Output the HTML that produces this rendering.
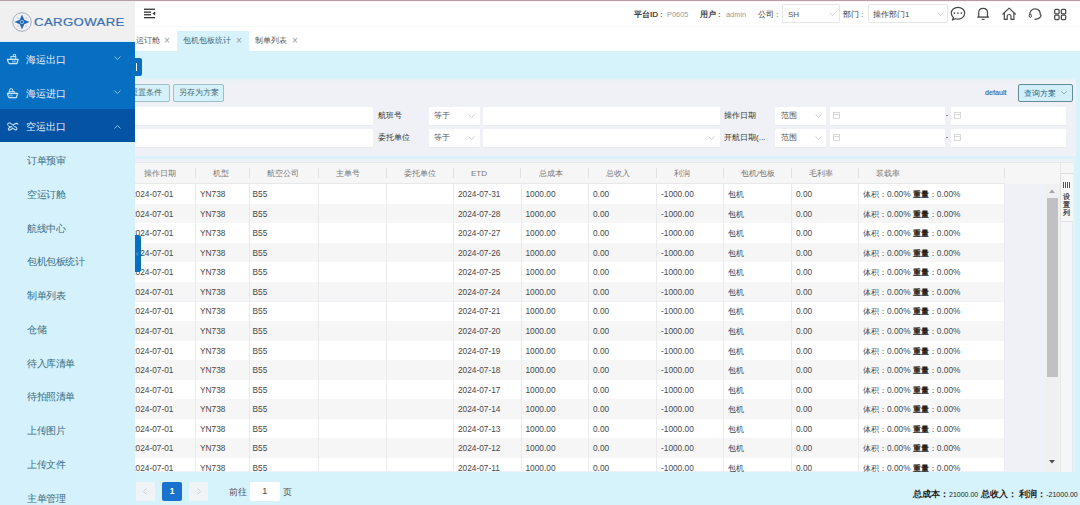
<!DOCTYPE html><html><head><meta charset="utf-8"><style>
*{margin:0;padding:0;box-sizing:border-box;}
html,body{width:1080px;height:505px;overflow:hidden;}
body{position:relative;background:#d6f2fb;font-family:"Liberation Sans",sans-serif;color:#333;}
.a{position:absolute;}
.nw{white-space:nowrap;}
.topline{left:0;top:0;width:1080px;height:1px;background:#b59ea5;}
.logo{left:0;top:1px;width:135px;height:40.5px;background:#f0f0f0;}
.side{left:0;top:41px;width:135px;height:464px;background:#d4f1fc;}
.m1{left:0;top:41.5px;width:135px;height:67.5px;background:#066fc2;}
.m2{left:0;top:109px;width:135px;height:33px;background:#0453a5;}
.mi{font-size:9.6px;color:#e8f3ff;white-space:nowrap;line-height:12px;}
.si{left:27px;font-size:10px;transform:scale(0.955);transform-origin:0 50%;color:#3a6d84;white-space:nowrap;line-height:12px;}
.hdr{left:135px;top:1px;width:945px;height:49.5px;background:#fff;}
.ht{font-size:8px;color:#333;white-space:nowrap;line-height:10px;}
.hv{font-size:8px;color:#9a9a9a;white-space:nowrap;line-height:10px;}
.sel{background:#fff;border:1px solid #e6e6e6;border-radius:2px;}
.tab{font-size:8px;line-height:10px;white-space:nowrap;color:#555;}
.panel{left:135px;top:78px;width:941px;height:77.5px;background:linear-gradient(#dcf3fa 0px,#eaf1f7 2px,#eff1f6 5px);}
.btn{background:#d5f1f9;border:1px solid #9dbec5;border-radius:2px;font-size:8.2px;color:#3f6474;line-height:16px;text-align:center;white-space:nowrap;}
.inp{background:#fff;border-radius:1px;box-shadow:0 0.6px 0 #e2e4e8;}
.lbl{font-size:8px;color:#333;line-height:10px;white-space:nowrap;}
.sv{font-size:8px;color:#555;line-height:10px;white-space:nowrap;}
.tbl{left:135px;top:162px;width:940px;height:309px;background:#eef1f6;overflow:hidden;}
.cell{position:absolute;font-size:8.3px;line-height:10px;color:#484848;white-space:nowrap;}
.hc{position:absolute;font-size:8px;line-height:10px;color:#787878;white-space:nowrap;}
.chev{position:absolute;}
</style></head><body>
<div class="a topline"></div>
<div class="a hdr"></div>
<div class="a" style="left:135px;top:1px;width:945px;height:1px;background:#fdf1f4"></div>
<div class="a" style="left:135px;top:26px;width:945px;height:1px;background:#f8f8f8"></div>
<svg class="a" style="left:143.6px;top:8px" width="12" height="11" viewBox="0 0 12 11"><rect x="0" y="0.6" width="11" height="1.3" fill="#333"/><rect x="0" y="3.5" width="7" height="1.3" fill="#333"/><rect x="0" y="6.1" width="7" height="1.3" fill="#333"/><rect x="0" y="9" width="11" height="1.3" fill="#333"/><path d="M11.2 3.6 L8.4 5.6 L11.2 7.6 Z" fill="#333"/></svg>
<div class="a ht" style="left:634px;top:9.7px;color:#222;-webkit-text-stroke:0.2px #222">平台ID :</div>
<div class="a hv" style="left:667px;top:10px;font-size:7.4px">P0605</div>
<div class="a ht" style="left:700px;top:9.7px;color:#222;-webkit-text-stroke:0.2px #222">用户 :</div>
<div class="a hv" style="left:726px;top:10px;font-size:7.4px">admin</div>
<div class="a ht" style="left:758px;top:9.7px">公司 :</div>
<div class="a sel" style="left:782px;top:4px;width:58px;height:19px"></div>
<div class="a ht" style="left:788px;top:10px;color:#555">SH</div>
<svg class="a" style="left:829px;top:12px" width="7" height="4" viewBox="0 0 7 4"><path d="M0.5 0.5 L3.5 3.5 L6.5 0.5" fill="none" stroke="#c0c4cc" stroke-width="0.8"/></svg>
<div class="a ht" style="left:843px;top:9.7px">部门 :</div>
<div class="a sel" style="left:868px;top:4px;width:80px;height:19px"></div>
<div class="a ht" style="left:873px;top:9.7px;color:#444">操作部门1</div>
<svg class="a" style="left:937px;top:12px" width="7" height="4" viewBox="0 0 7 4"><path d="M0.5 0.5 L3.5 3.5 L6.5 0.5" fill="none" stroke="#c0c4cc" stroke-width="0.8"/></svg>
<svg class="a" style="left:940px;top:0px" width="140" height="28" viewBox="940 0 140 28">
<path d="M955.2 18.7 C956.1 19 957 19.1 958 19.1 C961.8 19.1 964.7 16.4 964.7 13.1 C964.7 9.8 961.8 7.3 958 7.3 C954.2 7.3 951.3 9.8 951.3 13.1 C951.3 14.8 952.1 16.3 953.4 17.4 L952.3 19.9 Z" fill="none" stroke="#484848" stroke-width="1.15" stroke-linejoin="round"/>
<circle cx="954.4" cy="13.1" r="0.85" fill="#484848"/><circle cx="957.9" cy="13.1" r="0.85" fill="#484848"/><circle cx="961.4" cy="13.1" r="0.85" fill="#484848"/>
<path d="M978.7 17 L978.7 12.6 C978.7 9.9 980.5 8.3 983.1 8.3 C985.7 8.3 987.5 9.9 987.5 12.6 L987.5 17" fill="none" stroke="#484848" stroke-width="1.2"/>
<path d="M977.3 17.1 L988.9 17.1" stroke="#484848" stroke-width="1.4"/>
<path d="M981.6 19.4 L984.6 19.4" stroke="#484848" stroke-width="1.1"/>
<path d="M1002.7 14.2 L1009.1 8.1 L1015.5 14.2" fill="none" stroke="#484848" stroke-width="1.2" stroke-linejoin="round" stroke-linecap="round"/>
<path d="M1004.3 12.9 L1004.3 19.4 L1007.2 19.4 L1007.2 16.4 C1007.2 15.2 1008 14.5 1009.1 14.5 C1010.2 14.5 1011 15.2 1011 16.4 L1011 19.4 L1013.9 19.4 L1013.9 12.9" fill="none" stroke="#484848" stroke-width="1.2" stroke-linejoin="round"/>
<path d="M1029.6 15.2 C1029.6 11.3 1031.8 8.9 1035 8.9 C1038.2 8.9 1040.4 11.3 1040.4 15.2" fill="none" stroke="#484848" stroke-width="1.2"/>
<ellipse cx="1030.3" cy="15.7" rx="1.1" ry="1.7" fill="none" stroke="#484848" stroke-width="1"/>
<path d="M1040.4 14.6 C1041.3 15 1041.3 16.6 1040.2 17.2 C1039.2 18.6 1037.4 19.4 1034.6 19.4" fill="none" stroke="#484848" stroke-width="1.2"/>
<rect x="1054.7" y="9.4" width="4.4" height="4.4" rx="1" fill="none" stroke="#484848" stroke-width="1.25"/>
<rect x="1061.3" y="9.4" width="4.4" height="4.4" rx="1" fill="none" stroke="#484848" stroke-width="1.25"/>
<rect x="1054.7" y="15.1" width="4.4" height="4.4" rx="1" fill="none" stroke="#484848" stroke-width="1.25"/>
<rect x="1061.3" y="15.1" width="4.4" height="4.4" rx="1" fill="none" stroke="#484848" stroke-width="1.25"/>
</svg>
<div class="a" style="left:177px;top:31px;width:72px;height:20px;background:#d6f2fb"></div>
<div class="a tab" style="left:136px;top:36px">运订舱</div>
<div class="a tab" style="left:164px;top:35.5px;color:#999;font-size:10px">×</div>
<div class="a tab" style="left:183px;top:36px;color:#3a6e8c">包机包板统计</div>
<div class="a tab" style="left:236px;top:35.5px;color:#999;font-size:10px">×</div>
<div class="a tab" style="left:255px;top:36px">制单列表</div>
<div class="a tab" style="left:292px;top:35.5px;color:#999;font-size:10px">×</div>
<div class="a" style="left:128px;top:58px;width:14px;height:18px;background:#0b6dc0;border-radius:2px"></div>
<div class="a" style="left:135.5px;top:63px;width:1px;height:8px;background:#fff"></div>
<div class="a panel"></div>
<div class="a btn" style="left:123px;top:84px;width:46.5px;height:18px">重置条件</div>
<div class="a btn" style="left:173px;top:84px;width:51px;height:18px">另存为方案</div>
<div class="a" style="left:985px;top:88px;font-size:7.2px;line-height:10px;color:#3d6398;-webkit-text-stroke:0.15px #3d6398">default</div>
<div class="a btn" style="left:1018px;top:84px;width:55px;height:18px;border-color:#5e8d96;color:#1e6384;text-align:left;padding-left:4.5px;font-size:8.4px;background:#d3f0fa">查询方案</div>
<svg class="a" style="left:1061px;top:91px" width="6" height="3.5" viewBox="0 0 6 3.5"><path d="M0.5 0.5 L3.0 3.0 L5.5 0.5" fill="none" stroke="#7a9aa6" stroke-width="0.8"/></svg>
<div class="a inp" style="left:135px;top:106.5px;width:238px;height:18px"></div>
<div class="a lbl" style="left:378px;top:110.5px">航班号</div>
<div class="a inp" style="left:429px;top:106.5px;width:51px;height:18px"></div>
<div class="a sv" style="left:434px;top:111.0px">等于</div>
<svg class="a" style="left:468px;top:114.0px" width="7" height="4" viewBox="0 0 7 4"><path d="M0.5 0.5 L3.5 3.5 L6.5 0.5" fill="none" stroke="#c0c4cc" stroke-width="0.8"/></svg>
<div class="a inp" style="left:482.5px;top:106.5px;width:237px;height:18px"></div>
<div class="a lbl" style="left:724px;top:110.5px">操作日期</div>
<div class="a inp" style="left:775px;top:106.5px;width:51px;height:18px"></div>
<div class="a sv" style="left:780.5px;top:111.0px">范围</div>
<svg class="a" style="left:815px;top:114.0px" width="7" height="4" viewBox="0 0 7 4"><path d="M0.5 0.5 L3.5 3.5 L6.5 0.5" fill="none" stroke="#c0c4cc" stroke-width="0.8"/></svg>
<div class="a inp" style="left:829.5px;top:106.5px;width:115px;height:18px"></div>
<svg class="a" style="left:832.5px;top:112.0px" width="7" height="7" viewBox="0 0 7 7"><rect x="0.5" y="0.5" width="6" height="6" fill="none" stroke="#d0d0d0" stroke-width="0.8"/><path d="M0.5 2.5 L6.5 2.5" stroke="#d0d0d0" stroke-width="0.8"/></svg>
<div class="a" style="left:946.2px;top:115.1px;width:2.2px;height:1px;background:#8a8a8a"></div>
<div class="a inp" style="left:951px;top:106.5px;width:115px;height:18px"></div>
<svg class="a" style="left:953.5px;top:112.0px" width="7" height="7" viewBox="0 0 7 7"><rect x="0.5" y="0.5" width="6" height="6" fill="none" stroke="#d0d0d0" stroke-width="0.8"/><path d="M0.5 2.5 L6.5 2.5" stroke="#d0d0d0" stroke-width="0.8"/></svg>
<div class="a inp" style="left:135px;top:128.5px;width:238px;height:18px"></div>
<div class="a lbl" style="left:378px;top:132.5px">委托单位</div>
<div class="a inp" style="left:429px;top:128.5px;width:51px;height:18px"></div>
<div class="a sv" style="left:434px;top:133.0px">等于</div>
<svg class="a" style="left:468px;top:136.0px" width="7" height="4" viewBox="0 0 7 4"><path d="M0.5 0.5 L3.5 3.5 L6.5 0.5" fill="none" stroke="#c0c4cc" stroke-width="0.8"/></svg>
<div class="a inp" style="left:482.5px;top:128.5px;width:237px;height:18px"></div>
<svg class="a" style="left:708px;top:136.0px" width="7" height="4" viewBox="0 0 7 4"><path d="M0.5 0.5 L3.5 3.5 L6.5 0.5" fill="none" stroke="#c0c4cc" stroke-width="0.8"/></svg>
<div class="a lbl" style="left:724px;top:132.5px">开航日期(...</div>
<div class="a inp" style="left:775px;top:128.5px;width:51px;height:18px"></div>
<div class="a sv" style="left:780.5px;top:133.0px">范围</div>
<svg class="a" style="left:815px;top:136.0px" width="7" height="4" viewBox="0 0 7 4"><path d="M0.5 0.5 L3.5 3.5 L6.5 0.5" fill="none" stroke="#c0c4cc" stroke-width="0.8"/></svg>
<div class="a inp" style="left:829.5px;top:128.5px;width:115px;height:18px"></div>
<svg class="a" style="left:832.5px;top:134.0px" width="7" height="7" viewBox="0 0 7 7"><rect x="0.5" y="0.5" width="6" height="6" fill="none" stroke="#d0d0d0" stroke-width="0.8"/><path d="M0.5 2.5 L6.5 2.5" stroke="#d0d0d0" stroke-width="0.8"/></svg>
<div class="a" style="left:946.2px;top:137.1px;width:2.2px;height:1px;background:#8a8a8a"></div>
<div class="a inp" style="left:951px;top:128.5px;width:115px;height:18px"></div>
<svg class="a" style="left:953.5px;top:134.0px" width="7" height="7" viewBox="0 0 7 7"><rect x="0.5" y="0.5" width="6" height="6" fill="none" stroke="#d0d0d0" stroke-width="0.8"/><path d="M0.5 2.5 L6.5 2.5" stroke="#d0d0d0" stroke-width="0.8"/></svg>
<div class="a" style="left:135px;top:155.5px;width:941px;height:3px;background:#dbf2f8"></div>
<div class="a" style="left:135px;top:158.5px;width:941px;height:313px;background:linear-gradient(90deg,#eff1f6 936px,#e4f3f9 939px,#d6f2fb 941px)"></div>
<div class="a" style="left:135px;top:162px;width:938px;height:1px;background:#e6e8ec"></div>
<div class="a" style="left:135px;top:163px;width:938px;height:20.5px;background:#f6f6f6"></div>
<div class="a" style="left:135px;top:182.5px;width:869.5px;height:1px;background:#e8e8e8"></div>
<div class="a hc" style="left:144.0px;top:168.5px">操作日期</div>
<div class="a hc" style="left:213.0px;top:168.5px">机型</div>
<div class="a hc" style="left:267.0px;top:168.5px">航空公司</div>
<div class="a hc" style="left:336.0px;top:168.5px">主单号</div>
<div class="a hc" style="left:404.0px;top:168.5px">委托单位</div>
<div class="a hc" style="left:471.0px;top:168.5px">ETD</div>
<div class="a hc" style="left:538.5px;top:168.5px">总成本</div>
<div class="a hc" style="left:606.0px;top:168.5px">总收入</div>
<div class="a hc" style="left:674.0px;top:168.5px">利润</div>
<div class="a hc" style="left:741.0px;top:168.5px">包机/包板</div>
<div class="a hc" style="left:809.0px;top:168.5px">毛利率</div>
<div class="a hc" style="left:876.0px;top:168.5px">装载率</div>
<div class="a" style="left:194.9px;top:168px;width:1px;height:10px;background:#e2e2e2"></div>
<div class="a" style="left:248.9px;top:168px;width:1px;height:10px;background:#e2e2e2"></div>
<div class="a" style="left:317.9px;top:168px;width:1px;height:10px;background:#e2e2e2"></div>
<div class="a" style="left:385.9px;top:168px;width:1px;height:10px;background:#e2e2e2"></div>
<div class="a" style="left:452.9px;top:168px;width:1px;height:10px;background:#e2e2e2"></div>
<div class="a" style="left:520.4px;top:168px;width:1px;height:10px;background:#e2e2e2"></div>
<div class="a" style="left:587.9px;top:168px;width:1px;height:10px;background:#e2e2e2"></div>
<div class="a" style="left:655.9px;top:168px;width:1px;height:10px;background:#e2e2e2"></div>
<div class="a" style="left:722.9px;top:168px;width:1px;height:10px;background:#e2e2e2"></div>
<div class="a" style="left:790.9px;top:168px;width:1px;height:10px;background:#e2e2e2"></div>
<div class="a" style="left:857.9px;top:168px;width:1px;height:10px;background:#e2e2e2"></div>
<div class="a" style="left:1003.9px;top:168px;width:1px;height:10px;background:#e2e2e2"></div>
<div class="a" style="left:135px;top:184.2px;width:869.5px;height:19.55px;background:#ffffff"></div>
<div class="a cell" style="left:131.0px;top:189.1px">2024-07-01</div>
<div class="a cell" style="left:200.0px;top:189.1px">YN738</div>
<div class="a cell" style="left:252.5px;top:189.1px">B55</div>
<div class="a cell" style="left:458.0px;top:189.1px">2024-07-31</div>
<div class="a cell" style="left:525.5px;top:189.1px">1000.00</div>
<div class="a cell" style="left:593.0px;top:189.1px">0.00</div>
<div class="a cell" style="left:661.0px;top:189.1px">-1000.00</div>
<div class="a cell" style="left:728.0px;top:189.1px">包机</div>
<div class="a cell" style="left:796.0px;top:189.1px">0.00</div>
<div class="a cell" style="left:863.0px;top:189.1px">体积：0.00% <b style="font-weight:bold;color:#222">重量</b>：0.00%</div>
<div class="a" style="left:135px;top:203.75px;width:869.5px;height:19.55px;background:#f6f6f6"></div>
<div class="a cell" style="left:131.0px;top:208.65px">2024-07-01</div>
<div class="a cell" style="left:200.0px;top:208.65px">YN738</div>
<div class="a cell" style="left:252.5px;top:208.65px">B55</div>
<div class="a cell" style="left:458.0px;top:208.65px">2024-07-28</div>
<div class="a cell" style="left:525.5px;top:208.65px">1000.00</div>
<div class="a cell" style="left:593.0px;top:208.65px">0.00</div>
<div class="a cell" style="left:661.0px;top:208.65px">-1000.00</div>
<div class="a cell" style="left:728.0px;top:208.65px">包机</div>
<div class="a cell" style="left:796.0px;top:208.65px">0.00</div>
<div class="a cell" style="left:863.0px;top:208.65px">体积：0.00% <b style="font-weight:bold;color:#222">重量</b>：0.00%</div>
<div class="a" style="left:135px;top:223.29999999999998px;width:869.5px;height:19.55px;background:#ffffff"></div>
<div class="a cell" style="left:131.0px;top:228.2px">2024-07-01</div>
<div class="a cell" style="left:200.0px;top:228.2px">YN738</div>
<div class="a cell" style="left:252.5px;top:228.2px">B55</div>
<div class="a cell" style="left:458.0px;top:228.2px">2024-07-27</div>
<div class="a cell" style="left:525.5px;top:228.2px">1000.00</div>
<div class="a cell" style="left:593.0px;top:228.2px">0.00</div>
<div class="a cell" style="left:661.0px;top:228.2px">-1000.00</div>
<div class="a cell" style="left:728.0px;top:228.2px">包机</div>
<div class="a cell" style="left:796.0px;top:228.2px">0.00</div>
<div class="a cell" style="left:863.0px;top:228.2px">体积：0.00% <b style="font-weight:bold;color:#222">重量</b>：0.00%</div>
<div class="a" style="left:135px;top:242.85px;width:869.5px;height:19.55px;background:#f6f6f6"></div>
<div class="a cell" style="left:131.0px;top:247.75px">2024-07-01</div>
<div class="a cell" style="left:200.0px;top:247.75px">YN738</div>
<div class="a cell" style="left:252.5px;top:247.75px">B55</div>
<div class="a cell" style="left:458.0px;top:247.75px">2024-07-26</div>
<div class="a cell" style="left:525.5px;top:247.75px">1000.00</div>
<div class="a cell" style="left:593.0px;top:247.75px">0.00</div>
<div class="a cell" style="left:661.0px;top:247.75px">-1000.00</div>
<div class="a cell" style="left:728.0px;top:247.75px">包机</div>
<div class="a cell" style="left:796.0px;top:247.75px">0.00</div>
<div class="a cell" style="left:863.0px;top:247.75px">体积：0.00% <b style="font-weight:bold;color:#222">重量</b>：0.00%</div>
<div class="a" style="left:135px;top:262.4px;width:869.5px;height:19.55px;background:#ffffff"></div>
<div class="a cell" style="left:131.0px;top:267.29999999999995px">2024-07-01</div>
<div class="a cell" style="left:200.0px;top:267.29999999999995px">YN738</div>
<div class="a cell" style="left:252.5px;top:267.29999999999995px">B55</div>
<div class="a cell" style="left:458.0px;top:267.29999999999995px">2024-07-25</div>
<div class="a cell" style="left:525.5px;top:267.29999999999995px">1000.00</div>
<div class="a cell" style="left:593.0px;top:267.29999999999995px">0.00</div>
<div class="a cell" style="left:661.0px;top:267.29999999999995px">-1000.00</div>
<div class="a cell" style="left:728.0px;top:267.29999999999995px">包机</div>
<div class="a cell" style="left:796.0px;top:267.29999999999995px">0.00</div>
<div class="a cell" style="left:863.0px;top:267.29999999999995px">体积：0.00% <b style="font-weight:bold;color:#222">重量</b>：0.00%</div>
<div class="a" style="left:135px;top:281.95px;width:869.5px;height:19.55px;background:#f6f6f6"></div>
<div class="a cell" style="left:131.0px;top:286.84999999999997px">2024-07-01</div>
<div class="a cell" style="left:200.0px;top:286.84999999999997px">YN738</div>
<div class="a cell" style="left:252.5px;top:286.84999999999997px">B55</div>
<div class="a cell" style="left:458.0px;top:286.84999999999997px">2024-07-24</div>
<div class="a cell" style="left:525.5px;top:286.84999999999997px">1000.00</div>
<div class="a cell" style="left:593.0px;top:286.84999999999997px">0.00</div>
<div class="a cell" style="left:661.0px;top:286.84999999999997px">-1000.00</div>
<div class="a cell" style="left:728.0px;top:286.84999999999997px">包机</div>
<div class="a cell" style="left:796.0px;top:286.84999999999997px">0.00</div>
<div class="a cell" style="left:863.0px;top:286.84999999999997px">体积：0.00% <b style="font-weight:bold;color:#222">重量</b>：0.00%</div>
<div class="a" style="left:135px;top:301.5px;width:869.5px;height:19.55px;background:#ffffff"></div>
<div class="a cell" style="left:131.0px;top:306.4px">2024-07-01</div>
<div class="a cell" style="left:200.0px;top:306.4px">YN738</div>
<div class="a cell" style="left:252.5px;top:306.4px">B55</div>
<div class="a cell" style="left:458.0px;top:306.4px">2024-07-21</div>
<div class="a cell" style="left:525.5px;top:306.4px">1000.00</div>
<div class="a cell" style="left:593.0px;top:306.4px">0.00</div>
<div class="a cell" style="left:661.0px;top:306.4px">-1000.00</div>
<div class="a cell" style="left:728.0px;top:306.4px">包机</div>
<div class="a cell" style="left:796.0px;top:306.4px">0.00</div>
<div class="a cell" style="left:863.0px;top:306.4px">体积：0.00% <b style="font-weight:bold;color:#222">重量</b>：0.00%</div>
<div class="a" style="left:135px;top:321.04999999999995px;width:869.5px;height:19.55px;background:#f6f6f6"></div>
<div class="a cell" style="left:131.0px;top:325.94999999999993px">2024-07-01</div>
<div class="a cell" style="left:200.0px;top:325.94999999999993px">YN738</div>
<div class="a cell" style="left:252.5px;top:325.94999999999993px">B55</div>
<div class="a cell" style="left:458.0px;top:325.94999999999993px">2024-07-20</div>
<div class="a cell" style="left:525.5px;top:325.94999999999993px">1000.00</div>
<div class="a cell" style="left:593.0px;top:325.94999999999993px">0.00</div>
<div class="a cell" style="left:661.0px;top:325.94999999999993px">-1000.00</div>
<div class="a cell" style="left:728.0px;top:325.94999999999993px">包机</div>
<div class="a cell" style="left:796.0px;top:325.94999999999993px">0.00</div>
<div class="a cell" style="left:863.0px;top:325.94999999999993px">体积：0.00% <b style="font-weight:bold;color:#222">重量</b>：0.00%</div>
<div class="a" style="left:135px;top:340.6px;width:869.5px;height:19.55px;background:#ffffff"></div>
<div class="a cell" style="left:131.0px;top:345.5px">2024-07-01</div>
<div class="a cell" style="left:200.0px;top:345.5px">YN738</div>
<div class="a cell" style="left:252.5px;top:345.5px">B55</div>
<div class="a cell" style="left:458.0px;top:345.5px">2024-07-19</div>
<div class="a cell" style="left:525.5px;top:345.5px">1000.00</div>
<div class="a cell" style="left:593.0px;top:345.5px">0.00</div>
<div class="a cell" style="left:661.0px;top:345.5px">-1000.00</div>
<div class="a cell" style="left:728.0px;top:345.5px">包机</div>
<div class="a cell" style="left:796.0px;top:345.5px">0.00</div>
<div class="a cell" style="left:863.0px;top:345.5px">体积：0.00% <b style="font-weight:bold;color:#222">重量</b>：0.00%</div>
<div class="a" style="left:135px;top:360.15px;width:869.5px;height:19.55px;background:#f6f6f6"></div>
<div class="a cell" style="left:131.0px;top:365.04999999999995px">2024-07-01</div>
<div class="a cell" style="left:200.0px;top:365.04999999999995px">YN738</div>
<div class="a cell" style="left:252.5px;top:365.04999999999995px">B55</div>
<div class="a cell" style="left:458.0px;top:365.04999999999995px">2024-07-18</div>
<div class="a cell" style="left:525.5px;top:365.04999999999995px">1000.00</div>
<div class="a cell" style="left:593.0px;top:365.04999999999995px">0.00</div>
<div class="a cell" style="left:661.0px;top:365.04999999999995px">-1000.00</div>
<div class="a cell" style="left:728.0px;top:365.04999999999995px">包机</div>
<div class="a cell" style="left:796.0px;top:365.04999999999995px">0.00</div>
<div class="a cell" style="left:863.0px;top:365.04999999999995px">体积：0.00% <b style="font-weight:bold;color:#222">重量</b>：0.00%</div>
<div class="a" style="left:135px;top:379.7px;width:869.5px;height:19.55px;background:#ffffff"></div>
<div class="a cell" style="left:131.0px;top:384.59999999999997px">2024-07-01</div>
<div class="a cell" style="left:200.0px;top:384.59999999999997px">YN738</div>
<div class="a cell" style="left:252.5px;top:384.59999999999997px">B55</div>
<div class="a cell" style="left:458.0px;top:384.59999999999997px">2024-07-17</div>
<div class="a cell" style="left:525.5px;top:384.59999999999997px">1000.00</div>
<div class="a cell" style="left:593.0px;top:384.59999999999997px">0.00</div>
<div class="a cell" style="left:661.0px;top:384.59999999999997px">-1000.00</div>
<div class="a cell" style="left:728.0px;top:384.59999999999997px">包机</div>
<div class="a cell" style="left:796.0px;top:384.59999999999997px">0.00</div>
<div class="a cell" style="left:863.0px;top:384.59999999999997px">体积：0.00% <b style="font-weight:bold;color:#222">重量</b>：0.00%</div>
<div class="a" style="left:135px;top:399.25px;width:869.5px;height:19.55px;background:#f6f6f6"></div>
<div class="a cell" style="left:131.0px;top:404.15px">2024-07-01</div>
<div class="a cell" style="left:200.0px;top:404.15px">YN738</div>
<div class="a cell" style="left:252.5px;top:404.15px">B55</div>
<div class="a cell" style="left:458.0px;top:404.15px">2024-07-14</div>
<div class="a cell" style="left:525.5px;top:404.15px">1000.00</div>
<div class="a cell" style="left:593.0px;top:404.15px">0.00</div>
<div class="a cell" style="left:661.0px;top:404.15px">-1000.00</div>
<div class="a cell" style="left:728.0px;top:404.15px">包机</div>
<div class="a cell" style="left:796.0px;top:404.15px">0.00</div>
<div class="a cell" style="left:863.0px;top:404.15px">体积：0.00% <b style="font-weight:bold;color:#222">重量</b>：0.00%</div>
<div class="a" style="left:135px;top:418.8px;width:869.5px;height:19.55px;background:#ffffff"></div>
<div class="a cell" style="left:131.0px;top:423.7px">2024-07-01</div>
<div class="a cell" style="left:200.0px;top:423.7px">YN738</div>
<div class="a cell" style="left:252.5px;top:423.7px">B55</div>
<div class="a cell" style="left:458.0px;top:423.7px">2024-07-13</div>
<div class="a cell" style="left:525.5px;top:423.7px">1000.00</div>
<div class="a cell" style="left:593.0px;top:423.7px">0.00</div>
<div class="a cell" style="left:661.0px;top:423.7px">-1000.00</div>
<div class="a cell" style="left:728.0px;top:423.7px">包机</div>
<div class="a cell" style="left:796.0px;top:423.7px">0.00</div>
<div class="a cell" style="left:863.0px;top:423.7px">体积：0.00% <b style="font-weight:bold;color:#222">重量</b>：0.00%</div>
<div class="a" style="left:135px;top:438.35px;width:869.5px;height:19.55px;background:#f6f6f6"></div>
<div class="a cell" style="left:131.0px;top:443.25px">2024-07-01</div>
<div class="a cell" style="left:200.0px;top:443.25px">YN738</div>
<div class="a cell" style="left:252.5px;top:443.25px">B55</div>
<div class="a cell" style="left:458.0px;top:443.25px">2024-07-12</div>
<div class="a cell" style="left:525.5px;top:443.25px">1000.00</div>
<div class="a cell" style="left:593.0px;top:443.25px">0.00</div>
<div class="a cell" style="left:661.0px;top:443.25px">-1000.00</div>
<div class="a cell" style="left:728.0px;top:443.25px">包机</div>
<div class="a cell" style="left:796.0px;top:443.25px">0.00</div>
<div class="a cell" style="left:863.0px;top:443.25px">体积：0.00% <b style="font-weight:bold;color:#222">重量</b>：0.00%</div>
<div class="a" style="left:135px;top:457.9px;width:869.5px;height:13.600000000000023px;background:#ffffff"></div>
<div class="a cell" style="left:131.0px;top:462.79999999999995px">2024-07-01</div>
<div class="a cell" style="left:200.0px;top:462.79999999999995px">YN738</div>
<div class="a cell" style="left:252.5px;top:462.79999999999995px">B55</div>
<div class="a cell" style="left:458.0px;top:462.79999999999995px">2024-07-11</div>
<div class="a cell" style="left:525.5px;top:462.79999999999995px">1000.00</div>
<div class="a cell" style="left:593.0px;top:462.79999999999995px">0.00</div>
<div class="a cell" style="left:661.0px;top:462.79999999999995px">-1000.00</div>
<div class="a cell" style="left:728.0px;top:462.79999999999995px">包机</div>
<div class="a cell" style="left:796.0px;top:462.79999999999995px">0.00</div>
<div class="a cell" style="left:863.0px;top:462.79999999999995px">体积：0.00% <b style="font-weight:bold;color:#222">重量</b>：0.00%</div>
<div class="a" style="left:195.0px;top:184.2px;width:1px;height:287.3px;background:#ebebeb"></div>
<div class="a" style="left:249.0px;top:184.2px;width:1px;height:287.3px;background:#ebebeb"></div>
<div class="a" style="left:318.0px;top:184.2px;width:1px;height:287.3px;background:#ebebeb"></div>
<div class="a" style="left:386.0px;top:184.2px;width:1px;height:287.3px;background:#ebebeb"></div>
<div class="a" style="left:453.0px;top:184.2px;width:1px;height:287.3px;background:#ebebeb"></div>
<div class="a" style="left:520.5px;top:184.2px;width:1px;height:287.3px;background:#ebebeb"></div>
<div class="a" style="left:588.0px;top:184.2px;width:1px;height:287.3px;background:#ebebeb"></div>
<div class="a" style="left:656.0px;top:184.2px;width:1px;height:287.3px;background:#ebebeb"></div>
<div class="a" style="left:723.0px;top:184.2px;width:1px;height:287.3px;background:#ebebeb"></div>
<div class="a" style="left:791.0px;top:184.2px;width:1px;height:287.3px;background:#ebebeb"></div>
<div class="a" style="left:858.0px;top:184.2px;width:1px;height:287.3px;background:#ebebeb"></div>
<div class="a" style="left:1004.0px;top:184.2px;width:1px;height:287.3px;background:#ebebeb"></div>
<div class="a" style="left:1044.5px;top:183.5px;width:14.5px;height:288px;background:#f0f0f0"></div>
<svg class="a" style="left:1049px;top:189px" width="6" height="4" viewBox="0 0 6 4"><path d="M0 4 L3 0.5 L6 4 Z" fill="#a3a3a3"/></svg>
<div class="a" style="left:1046.5px;top:198px;width:11px;height:179px;background:#c1c1c1"></div>
<svg class="a" style="left:1049px;top:460px" width="6" height="4" viewBox="0 0 6 4"><path d="M0 0 L3 3.5 L6 0 Z" fill="#505050"/></svg>
<div class="a" style="left:1059.5px;top:182.5px;width:13.5px;height:289px;background:#f5f6f9;border-left:1px solid #e8e9ec;border-right:1px solid #e8e9ec"></div>
<div class="a" style="left:1059.5px;top:163px;width:1px;height:20px;background:#e8e8e8"></div>
<div class="a" style="left:1059.5px;top:173px;width:13.5px;height:48.5px;background:#f7f7f7;border-top:1px solid #dcdcdc;border-bottom:1px solid #e2e2e2;border-left:1px solid #e2e2e2"></div>
<div class="a" style="left:1063px;top:182px;width:1px;height:5.6px;background:#555"></div>
<div class="a" style="left:1065px;top:182px;width:1px;height:5.6px;background:#555"></div>
<div class="a" style="left:1067px;top:182px;width:1px;height:5.6px;background:#555"></div>
<div class="a" style="left:1069px;top:182px;width:1px;height:5.6px;background:#555"></div>
<div class="a" style="left:1060px;width:12px;text-align:center;top:191.6px;font-size:7.2px;line-height:9px;color:#2a2a2a;-webkit-text-stroke:0.2px #2a2a2a">设</div>
<div class="a" style="left:1060px;width:12px;text-align:center;top:200.0px;font-size:7.2px;line-height:9px;color:#2a2a2a;-webkit-text-stroke:0.2px #2a2a2a">置</div>
<div class="a" style="left:1060px;width:12px;text-align:center;top:208.4px;font-size:7.2px;line-height:9px;color:#2a2a2a;-webkit-text-stroke:0.2px #2a2a2a">列</div>
<div class="a" style="left:136px;top:482px;width:18.5px;height:18.7px;background:#f1f4f7;border-radius:2px"></div>
<div class="a" style="left:189px;top:482px;width:19px;height:18.7px;background:#f1f4f7;border-radius:2px"></div>
<svg class="a" style="left:143px;top:488.3px" width="4" height="7" viewBox="0 0 4 7"><path d="M3.5 0.5 L0.5 3.5 L3.5 6.5" fill="none" stroke="#c8ccd2" stroke-width="0.8"/></svg>
<svg class="a" style="left:196.8px;top:488.3px" width="4" height="7" viewBox="0 0 4 7"><path d="M0.5 0.5 L3.5 3.5 L0.5 6.5" fill="none" stroke="#c8ccd2" stroke-width="0.8"/></svg>
<div class="a" style="left:162px;top:482px;width:20px;height:18.7px;background:#1b72cc;border-radius:2px;color:#fff;font-size:8.5px;font-weight:bold;line-height:18.7px;text-align:center">1</div>
<div class="a" style="left:229px;top:486.5px;font-size:8.5px;line-height:10px;color:#555">前往</div>
<div class="a" style="left:250px;top:482px;width:29.5px;height:18.7px;background:#fff;border-radius:2px;font-size:9px;line-height:18.7px;text-align:center;color:#444">1</div>
<div class="a" style="left:283px;top:486.5px;font-size:8.5px;line-height:10px;color:#555">页</div>
<div class="a nw" style="left:913px;top:489.3px;font-size:9px;line-height:11px;color:#222"><b>总成本：</b><span style="font-size:7px">21000.00</span> <b>总收入：</b> <b>利润：</b><span style="font-size:7px">-21000.00</span></div>
<div class="a logo"></div>
<svg class="a" style="left:10.6px;top:10.9px" width="22" height="22" viewBox="0 0 22 22"><circle cx="11" cy="11" r="9.3" fill="none" stroke="#8aa0ba" stroke-width="0.8"/><path d="M11 3.6 L13.3 8.7 L18.6 11 L13.3 13.3 L11 18.4 L8.7 13.3 L3.4 11 L8.7 8.7 Z" fill="#2a68b4"/><circle cx="11" cy="11" r="1.7" fill="none" stroke="#9cc8ee" stroke-width="0.8"/><circle cx="7" cy="7" r="0.5" fill="#5580b8"/><circle cx="15" cy="7" r="0.5" fill="#5580b8"/><circle cx="7" cy="15" r="0.5" fill="#5580b8"/><circle cx="15" cy="15" r="0.5" fill="#5580b8"/></svg>
<div class="a nw" style="left:34px;top:15.5px;font-size:11.5px;line-height:12px;color:#3a6fb2;letter-spacing:0.3px;-webkit-text-stroke:0.2px #3a6fb2;transform:scaleX(1.15);transform-origin:0 0">CARGOWARE</div>
<div class="a side"></div>
<div class="a m1"></div><div class="a m2"></div>
<div class="a mi" style="left:25.5px;top:54px">海运出口</div>
<div class="a mi" style="left:25.5px;top:87.5px">海运进口</div>
<div class="a mi" style="left:25.5px;top:121px">空运出口</div>
<svg class="a" style="left:113.5px;top:56px" width="7" height="4" viewBox="0 0 7 4"><path d="M0.5 0.5 L3.5 3.5 L6.5 0.5" fill="none" stroke="#8cc0f0" stroke-width="1"/></svg>
<svg class="a" style="left:113.5px;top:90px" width="7" height="4" viewBox="0 0 7 4"><path d="M0.5 0.5 L3.5 3.5 L6.5 0.5" fill="none" stroke="#8cc0f0" stroke-width="1"/></svg>
<svg class="a" style="left:113.5px;top:125px" width="7" height="4" viewBox="0 0 7 4"><path d="M0.5 3.5 L3.5 0.5 L6.5 3.5" fill="none" stroke="#8cc0f0" stroke-width="1"/></svg>
<svg class="a" style="left:4px;top:50px" width="20" height="20" viewBox="0 0 20 20"><path d="M3.4 9.3 L14.1 9.3 L12.9 13.6 L5.3 13.6 Q3.9 12 3.4 9.3 Z" fill="none" stroke="#c4e4ff" stroke-width="1.3" stroke-linejoin="round"/><rect x="6.9" y="6.6" width="4.9" height="2.7" fill="none" stroke="#c4e4ff" stroke-width="1"/><rect x="9.3" y="4.7" width="2.3" height="1.9" fill="none" stroke="#c4e4ff" stroke-width="0.9"/><rect x="8" y="10.6" width="3.8" height="1.9" fill="#c4e4ff" opacity="0.55"/></svg>
<svg class="a" style="left:4px;top:84px" width="20" height="20" viewBox="0 0 20 20"><path d="M5.6 7.6 L5.6 6 Q5.6 4.6 7.2 4.6 Q8.8 4.6 8.8 6 L8.8 7.6" fill="none" stroke="#c4e4ff" stroke-width="1"/><rect x="5" y="7.6" width="5.5" height="1.7" fill="none" stroke="#c4e4ff" stroke-width="0.9"/><path d="M3.5 9.3 L13.6 9.3 L12.4 13.6 L5 13.6 Q3.8 12 3.5 9.3 Z" fill="none" stroke="#c4e4ff" stroke-width="1.3" stroke-linejoin="round"/><rect x="5.2" y="10.6" width="3.6" height="1.8" fill="#c4e4ff" opacity="0.5"/></svg>
<svg class="a" style="left:4px;top:117px" width="20" height="20" viewBox="0 0 20 20"><path d="M3.6 6.9 C4.6 5.6 6.4 6 7.4 6.8 L12.4 10.6 C13.6 11.6 12.6 13.4 11.2 12.7 L7.6 10.6 M14.2 7.4 C13.4 6 11.8 6.2 10.6 7 L5 11 C3.8 11.9 4.4 13.5 6 13 L9.4 11" fill="none" stroke="#c4e4ff" stroke-width="1.05"/><path d="M3.6 6.9 C3.2 7.6 3.6 8.4 4.4 8.8 L6.2 10" fill="none" stroke="#c4e4ff" stroke-width="1"/></svg>
<div class="a si" style="top:155.1px">订单预审</div>
<div class="a si" style="top:188.85px">空运订舱</div>
<div class="a si" style="top:222.6px">航线中心</div>
<div class="a si" style="top:256.35px">包机包板统计</div>
<div class="a si" style="top:290.1px">制单列表</div>
<div class="a si" style="top:323.85px">仓储</div>
<div class="a si" style="top:357.6px">待入库清单</div>
<div class="a si" style="top:391.35px">待拍照清单</div>
<div class="a si" style="top:425.1px">上传图片</div>
<div class="a si" style="top:458.85px">上传文件</div>
<div class="a si" style="top:492.6px">主单管理</div>
<div class="a" style="left:134.5px;top:234.5px;width:6px;height:37.5px;background:#066fc2;border-radius:0 2.5px 2.5px 0"></div>
<svg class="a" style="left:136px;top:251.5px" width="2.5" height="4" viewBox="0 0 2.5 4"><path d="M2.0 0.5 L0.5 2.0 L2.0 3.5" fill="none" stroke="#9ccbf3" stroke-width="0.7"/></svg>
</body></html>
